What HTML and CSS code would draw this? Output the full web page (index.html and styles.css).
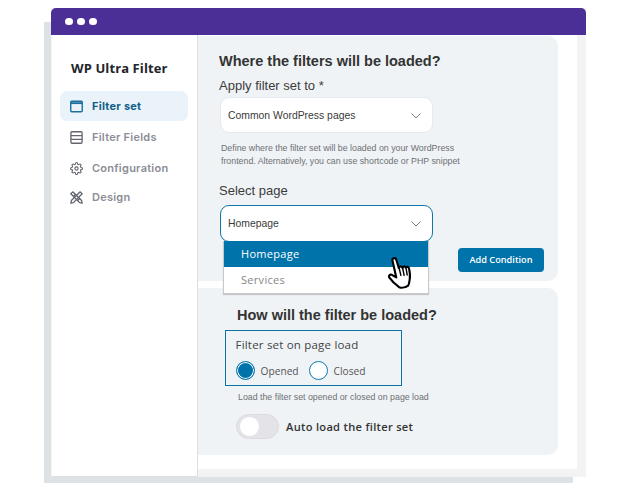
FILE: index.html
```html
<!DOCTYPE html>
<html lang="en">
<head>
<meta charset="utf-8">
<title>WP Ultra Filter</title>
<link rel="stylesheet" href="styles.css">
</head>
<body>
<div class="stage">
  <div class="window">
    <header class="titlebar"><i class="dot"></i><i class="dot"></i><i class="dot"></i></header>
    <div class="app">
      <aside class="sidebar">
        <h1 class="brand">WP Ultra Filter</h1>
        <nav class="menu">
          <a class="item item-active">
            <svg class="ico" viewBox="0 0 14 14" fill="none" stroke="currentColor"><rect x=".8" y="1.400" width="12.400" height="11.200" rx="1" stroke-width="1.500"/><path d="M1 3.400h12" stroke-width="2"/></svg>
            Filter set</a>
          <a class="item item-fields">
            <svg class="ico" viewBox="0 0 14 14" fill="none" stroke="currentColor" stroke-width="1.400"><rect x="1" y=".8" width="12" height="12.400" rx="1"/><path d="M1 5h12M1 9h12"/></svg>
            Filter Fields</a>
          <a class="item item-config">
            <svg class="ico" viewBox="0 0 24 24" fill="none" stroke="currentColor" stroke-width="2" stroke-linecap="round" stroke-linejoin="round"><circle cx="12" cy="12" r="3"/><path d="M19.400 15a1.650 1.650 0 0 0 .33 1.820l.06.06a2 2 0 0 1 0 2.830 2 2 0 0 1-2.830 0l-.06-.06a1.650 1.650 0 0 0-1.820-.33 1.650 1.650 0 0 0-1 1.510V21a2 2 0 0 1-2 2 2 2 0 0 1-2-2v-.09A1.650 1.650 0 0 0 9 19.400a1.650 1.650 0 0 0-1.820.33l-.06.06a2 2 0 0 1-2.830 0 2 2 0 0 1 0-2.830l.06-.06a1.650 1.650 0 0 0 .33-1.820 1.650 1.650 0 0 0-1.510-1H3a2 2 0 0 1-2-2 2 2 0 0 1 2-2h.09A1.650 1.650 0 0 0 4.600 9a1.650 1.650 0 0 0-.33-1.820l-.06-.06a2 2 0 0 1 0-2.830 2 2 0 0 1 2.830 0l.06.06a1.650 1.650 0 0 0 1.820.33H9a1.650 1.650 0 0 0 1-1.510V3a2 2 0 0 1 2-2 2 2 0 0 1 2 2v.09a1.650 1.650 0 0 0 1 1.510 1.650 1.650 0 0 0 1.820-.33l.06-.06a2 2 0 0 1 2.830 0 2 2 0 0 1 0 2.830l-.06.06a1.650 1.650 0 0 0-.33 1.820V9a1.650 1.650 0 0 0 1.510 1H21a2 2 0 0 1 2 2 2 2 0 0 1-2 2h-.09a1.650 1.650 0 0 0-1.510 1z"/></svg>
            Configuration</a>
          <a class="item item-design">
            <svg class="ico" viewBox="0 0 14 14" fill="none" stroke="currentColor" stroke-width="1.400" stroke-linejoin="round"><path d="M3 .9.900 3l9.400 9.500 2.800.6-.6-2.800z"/><path d="M11 .9 13.100 3l-9.400 9.500-2.800.6.6-2.800z"/><path d="M3.500 6 6 3.500M8 10.500 10.500 8"/></svg>
            Design</a>
        </nav>
      </aside>
      <main class="content">
        <section class="panel panel-where">
          <h2 class="title">Where the filters will be loaded?</h2>
          <label class="label">Apply filter set to *</label>
          <div class="select">
            <span>Common WordPress pages</span>
            <svg class="chev" viewBox="0 0 10 6" fill="none" stroke="currentColor" stroke-width="1"><path d="M.5.500 5 5 9.500.5"/></svg>
          </div>
          <p class="help">Define where the filter set will be loaded on your WordPress<br>frontend. Alternatively, you can use shortcode or PHP snippet</p>
          <label class="label label-page">Select page</label>
          <div class="select select-open">
            <span>Homepage</span>
            <svg class="chev" viewBox="0 0 10 6" fill="none" stroke="currentColor" stroke-width="1"><path d="M.5.500 5 5 9.500.5"/></svg>
          </div>
          <ul class="dropdown">
            <li class="option option-on">Homepage</li>
            <li class="option">Services</li>
          </ul>
          <svg class="hand" viewBox="0 0 26 34">
            <path d="M7 3.500c0-2.600 3.800-2.600 4 0l1.500 9c.2-2 3.300-2.200 3.700.2.300-1.800 3.200-1.800 3.500.4.600-1.300 3-1 3.100 1 .3 4 .2 8-.8 11-.8 3-1.500 5-2.500 6.500-3 1.500-7 1.600-9.500.2C7 29 3 24 1.300 20.500c-.8-2 1.200-3.400 3-2.300L8.500 21.500z" fill="#fff" stroke="#000" stroke-width="2.200" stroke-linejoin="round"/>
            <path d="M12.800 13l.7 7M16.300 13l.5 7.500M19.800 14.500l.2 6" fill="none" stroke="#000" stroke-width="1.500" stroke-linecap="round"/>
          </svg>
          <button class="btn" type="button">Add Condition</button>
        </section>
        <section class="panel panel-how">
          <h2 class="title title-how">How will the filter be loaded?</h2>
          <div class="box">
            <div class="box-label">Filter set on page load</div>
            <div class="radios">
              <span class="radio radio-on"></span><span class="radio-text">Opened</span>
              <span class="radio"></span><span class="radio-text">Closed</span>
            </div>
          </div>
          <p class="help help-how">Load the filter set opened or closed on page load</p>
          <div class="toggle-row">
            <span class="toggle"><span class="knob"></span></span>
            <span class="toggle-text">Auto load the filter set</span>
          </div>
        </section>
      </main>
    </div>
  </div>
</div>
</body>
</html>
```
FILE: styles.css
```css
* { box-sizing: border-box; }
html, body { margin: 0; background: #fff; }
body { width: 630px; height: 491px; overflow: hidden; font-family: "Liberation Sans", Arial, sans-serif; }
.stage { padding: 8px 44px 0 51px; position: relative; }
.stage::before { content: ""; position: absolute; left: 44px; top: 22px; width: 529px; height: 461px; background: #dde3e4; }
.window { position: relative; width: 535px; height: 469px; display: flex; flex-direction: column; background: #f3f3f3; }
.titlebar { height: 27px; flex: none; background: #4b2e96; border-radius: 5px 5px 0 0; display: flex; align-items: center; gap: 4.500px; padding: 0 0 0 14px; }
.dot { width: 7.500px; height: 7.500px; border-radius: 50%; background: #fff; }
.app { flex: 1; display: flex; min-height: 0; }
.sidebar { width: 146px; flex: none; background: #fff; border-right: 1px solid #dcdee0; border-bottom: 1px solid #dcdee0; margin-left: 1px; padding: 24px 9px 0 8px; }
.brand { margin: 0 0 14px 11px; font: 700 13px/18px "Open Sans", sans-serif; color: #22242a; letter-spacing: .1px; }
.menu { display: flex; flex-direction: column; }
.item { height: 30px; display: flex; align-items: center; gap: 9px; padding-left: 10px; border-radius: 7px; font: 600 11px/14px "Inter", sans-serif; color: #8c8d96; letter-spacing: .25px; }
.item-active { background: #eaf3f9; color: #125f8b; font-weight: 700; }
.item-fields { margin-top: 1px; }
.item-config { margin-top: 1px; }
.item-design { margin-top: -1px; }
.ico { width: 13px; height: 13px; flex: none; color: #63656e; }
.item-active .ico { color: #1b6f9f; }
.content { width: 379px; flex: none; background: #fff; height: 434px; padding-top: 1px; }
.panel { position: relative; width: 360px; background: #eff3f6; border-radius: 0 10px 10px 0; }
.panel-where { height: 245px; padding: 16px 0 0 21px; }
.panel-how { height: 167px; margin-top: 7px; padding: 18px 0 0 27px; }
.title { margin: 0; font: 700 14.500px/18px "Liberation Sans", Arial, sans-serif; color: #333; }
.title-how { margin-left: 12px; }
.label { display: block; margin-top: 7px; font: 400 13px/18px "Liberation Sans", Arial, sans-serif; color: #3c3c3c; }
.label-page { margin-top: 14px; }
.select { width: 213px; height: 36px; margin: 2px 0 0 1px; padding: 1px 11px 0 7px; display: flex; align-items: center; justify-content: space-between; background: #fff; border: 1px solid #e6e9ed; border-radius: 9px; font: 400 10.400px/14px "Liberation Sans", Arial, sans-serif; color: #3a3a3a; }
.select-open { height: 37px; margin-top: 5px; padding-top: 0; border: 1.500px solid #0d76ab; }
.chev { width: 10px; height: 6px; color: #7b7b80; }
.help { margin: 9px 0 0 2px; font: 400 8.800px/13px "Liberation Sans", Arial, sans-serif; color: #6e6f73; }
.dropdown { position: absolute; left: 25px; top: 205px; width: 206px; margin: 0; padding: 0; list-style: none; background: #fff; border: 1px solid #c9c9cc; border-top: 0; box-shadow: 0 1px 1px #c7c7ca; z-index: 2; }
.option { height: 26px; padding-left: 17px; font: 400 11px/26px "Open Sans", sans-serif; color: #85868a; letter-spacing: .3px; }
.option-on { background: #0073aa; color: #fff; }
.hand { position: absolute; left: 189px; top: 220px; width: 26px; height: 33px; z-index: 3; transform: rotate(-8deg); }
.btn { position: absolute; left: 260px; top: 212px; width: 86px; height: 24px; padding: 0; border: 0; border-radius: 4px; background: #0073aa; color: #fff; font: 600 9.200px/24px "Open Sans", sans-serif; }
.box { width: 177px; height: 56px; margin: 6px 0 0; padding: 6px 0 0 9.500px; border: 1.500px solid #0c73a6; }
.box-label { font: 400 11.500px/16px "Open Sans", sans-serif; color: #444; letter-spacing: .2px; }
.radios { display: flex; align-items: center; margin-top: 8px; font: 400 10.200px/14px "Open Sans", sans-serif; color: #555; }
.radio { width: 19px; height: 19px; border-radius: 50%; background: #fff; border: 1.500px solid #0c78ae; flex: none; }
.radio-on { background: #0073aa; box-shadow: inset 0 0 0 1px #fff; }
.radio-text { margin: 0 10px 0 6px; }
.help-how { margin: 5px 0 0 13px; line-height: 12px; }
.toggle-row { display: flex; align-items: center; gap: 7px; margin: 11px 0 0 11px; }
.toggle { width: 43px; height: 25px; border-radius: 13px; background: #e4e4e8; border: 1px solid #dcdce0; padding: 2px 0 0 3px; flex: none; }
.knob { display: block; width: 19px; height: 19px; border-radius: 50%; background: #fff; }
.toggle-text { padding-top: 1px; font: 600 11.100px/16px "Open Sans", sans-serif; color: #333; letter-spacing: .3px; }
```
